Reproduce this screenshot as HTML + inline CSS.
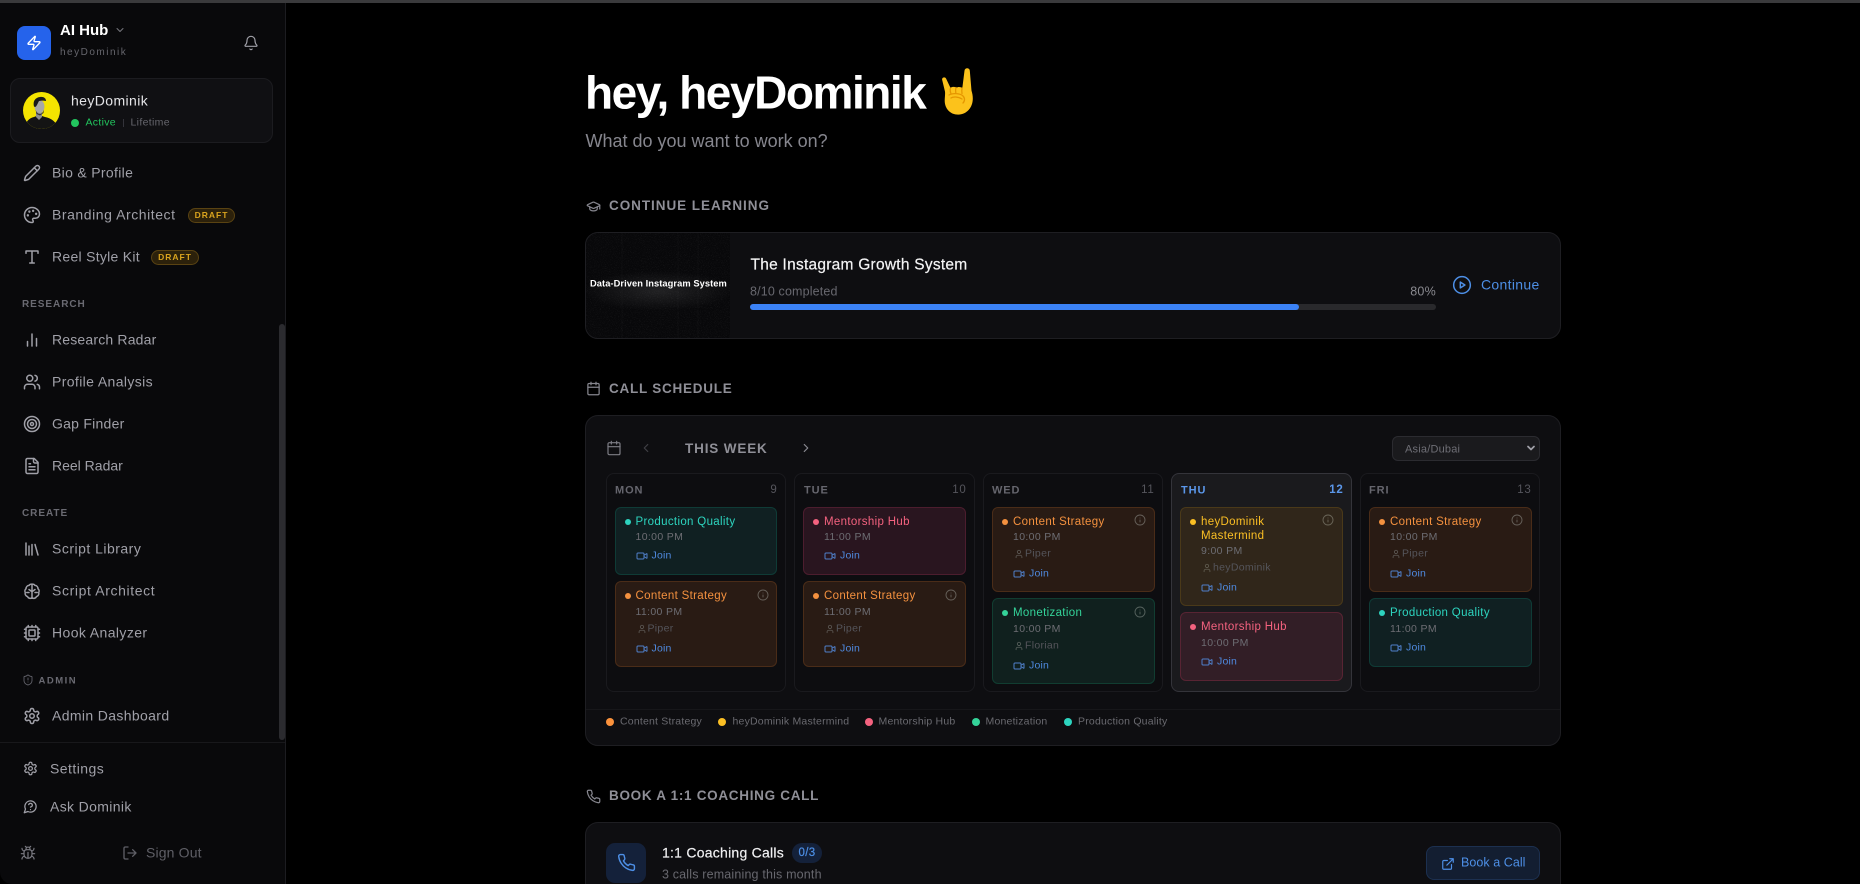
<!DOCTYPE html>
<html lang="en"><head><meta charset="utf-8"><title>AI Hub</title>
<style>
*{box-sizing:border-box;margin:0;padding:0}
html,body{width:1860px;height:884px;overflow:hidden;background:#000}
body{position:relative;font-family:"Liberation Sans",sans-serif;color:#a1a1aa}
.a{position:absolute}
.t{position:absolute;white-space:nowrap;transform:translateY(-50%);line-height:1.2}
svg.i{position:absolute;fill:none;stroke:currentColor;stroke-width:2;stroke-linecap:round;stroke-linejoin:round}
.nav{font-size:14px;letter-spacing:.38px;color:#a0a0a8;left:52px}
.navi{left:23px;width:18px;height:18px;color:#a0a0a8;stroke-width:1.8}
.sec{font-size:10px;letter-spacing:.95px;color:#6a6a72;font-weight:700;left:22px}
.draft{position:absolute;height:15px;border:1px solid #5a4312;background:#2c210b;border-radius:8px;color:#d9a31e;font-size:8.5px;font-weight:700;letter-spacing:1px;line-height:13px;text-align:center}
.h{font-size:13.5px;font-weight:700;letter-spacing:.95px;color:#8f8f97;left:609px}
.hi{left:586px;width:15px;height:15px;color:#85858d;stroke-width:1.8}
.card{position:absolute;left:585px;width:976px;background:#0e0e11;border:1px solid #1e1e22;border-radius:13px}
.col{position:absolute;top:473px;height:219px;width:180px;border:1px solid #1a1a1e;border-radius:8px;background:#0d0d10}
.col.th{background:#1a1a1d;border-color:#34343a}
.dn{font-size:11px;font-weight:700;letter-spacing:.9px;color:#66666e;top:17px}
.dnum{font-size:11.5px;letter-spacing:.7px;color:#55555c;top:17px;right:7.5px}
.ev{position:absolute;width:162.5px;border:1px solid;border-radius:6px}
.ev svg.m{margin-top:.5px}
.o{background:#291b14;border-color:#4a2c18;color:#f4913f}
.c{background:#102022;border-color:#0f3b36;color:#2dd4bf}
.r{background:#29151f;border-color:#4c1d2e;color:#f4627f}
.g{background:#10201e;border-color:#113d31;color:#34d399}
.y{background:#30261a;border-color:#4a3919;color:#fbbf24}
.rr{background:#321e26;border-color:#582433;color:#f4627f}
.dot{position:absolute;left:9px;top:11px;width:6px;height:6px;border-radius:50%;background:currentColor}
.tt{position:absolute;left:20px;font-size:11.5px;letter-spacing:.33px;line-height:13px;top:8px;white-space:nowrap}
.tm,.pn,.jn{position:absolute;white-space:nowrap}
.tm{transform:translateY(calc(-50% + 1px));left:20px;font-size:10.5px;letter-spacing:.35px;color:#6d6d73}
.pn{transform:translateY(calc(-50% + .5px));left:32px;font-size:10.5px;letter-spacing:.3px;color:#55555b}
.jn{transform:translateY(calc(-50% + .5px));left:36px;font-size:10.5px;letter-spacing:.2px;color:#4f8ae0}
.leg{font-size:10.5px;letter-spacing:.2px;color:#6a6a70;top:722px}
.ld{position:absolute;top:717.5px;width:8px;height:8px;border-radius:50%}
</style></head><body>
<svg width="0" height="0" style="position:absolute"><defs>
<symbol id="info" viewBox="0 0 24 24"><circle cx="12" cy="12" r="10"/><path d="M12 16v-4M12 8h.01"/></symbol>
<symbol id="user" viewBox="0 0 24 24"><path d="M19 21v-2a4 4 0 0 0-4-4H9a4 4 0 0 0-4 4v2"/><circle cx="12" cy="7" r="4"/></symbol>
<symbol id="vid" viewBox="0 0 24 24"><path d="m16 13 5.223 3.482a.5.5 0 0 0 .777-.416V7.870a.5.5 0 0 0-.752-.432L16 10.500"/><rect x="2" y="6" width="14" height="12" rx="2"/></symbol>
<symbol id="gear" viewBox="0 0 24 24"><path d="M12.220 2h-.44a2 2 0 0 0-2 2v.18a2 2 0 0 1-1 1.730l-.43.25a2 2 0 0 1-2 0l-.15-.08a2 2 0 0 0-2.730.73l-.22.38a2 2 0 0 0 .73 2.730l.15.1a2 2 0 0 1 1 1.720v.51a2 2 0 0 1-1 1.740l-.15.09a2 2 0 0 0-.73 2.730l.22.38a2 2 0 0 0 2.730.73l.15-.08a2 2 0 0 1 2 0l.43.25a2 2 0 0 1 1 1.730V20a2 2 0 0 0 2 2h.44a2 2 0 0 0 2-2v-.18a2 2 0 0 1 1-1.730l.43-.25a2 2 0 0 1 2 0l.15.08a2 2 0 0 0 2.730-.73l.22-.39a2 2 0 0 0-.73-2.730l-.15-.08a2 2 0 0 1-1-1.740v-.5a2 2 0 0 1 1-1.740l.15-.09a2 2 0 0 0 .73-2.730l-.22-.38a2 2 0 0 0-2.730-.73l-.15.08a2 2 0 0 1-2 0l-.43-.25a2 2 0 0 1-1-1.730V4a2 2 0 0 0-2-2z"/><circle cx="12" cy="12" r="3"/></symbol>
<symbol id="cal" viewBox="0 0 24 24"><path d="M8 2v4M16 2v4"/><rect x="3" y="4" width="18" height="18" rx="2"/><path d="M3 10h18"/></symbol>
<symbol id="phone" viewBox="0 0 24 24"><path d="M22 16.920v3a2 2 0 0 1-2.180 2 19.790 19.790 0 0 1-8.630-3.070 19.500 19.500 0 0 1-6-6 19.790 19.790 0 0 1-3.070-8.670A2 2 0 0 1 4.110 2h3a2 2 0 0 1 2 1.720 12.840 12.840 0 0 0 .7 2.810 2 2 0 0 1-.45 2.110L8.090 9.910a16 16 0 0 0 6 6l1.270-1.270a2 2 0 0 1 2.110-.45 12.840 12.840 0 0 0 2.810.7A2 2 0 0 1 22 16.920z"/></symbol>
<filter id="nz" x="0" y="0" width="100%" height="100%"><feTurbulence type="fractalNoise" baseFrequency="1.1" numOctaves="2" seed="7"/><feColorMatrix values="0 0 0 0 1 0 0 0 0 1 0 0 0 0 1 1.6 0 0 0 -0.82"/></filter>
<radialGradient id="gl" cx="50%" cy="50%" r="50%"><stop offset="0" stop-color="#fff" stop-opacity=".1"/><stop offset="1" stop-color="#fff" stop-opacity="0"/></radialGradient>
</defs></svg>

<!-- window top strip -->
<div class="a" style="left:0;top:0;width:1860px;height:3px;background:#3a3a3c"></div>

<!-- sidebar -->
<div class="a" style="left:0;top:3px;width:286px;height:881px;background:#09090b;border-right:1px solid #1c1c20;border-bottom-left-radius:12px"></div>
<div class="a" style="left:279px;top:324px;width:6px;height:416px;border-radius:3px;background:#2b2b2f"></div>

<div class="a" style="left:17px;top:26px;width:34px;height:34px;border-radius:8px;background:#2563eb"></div>
<svg class="i" viewBox="0 0 24 24" style="left:26px;top:35px;width:16px;height:16px;color:#fff"><path d="M4 14a1 1 0 0 1-.78-1.630l9.900-10.200a.5.5 0 0 1 .86.46l-1.920 6.020A1 1 0 0 0 13 10h7a1 1 0 0 1 .78 1.630l-9.900 10.200a.5.5 0 0 1-.86-.46l1.920-6.020A1 1 0 0 0 11 14z"/></svg>
<div class="t" style="left:60px;top:31px;font-size:15px;font-weight:700;color:#fff">AI Hub</div>
<svg class="i" viewBox="0 0 24 24" style="left:114px;top:24px;width:12px;height:12px;color:#77777e"><path d="m6 9 6 6 6-6"/></svg>
<div class="t" style="left:60px;top:52.500px;font-size:10px;letter-spacing:1.500px;color:#66666d">heyDominik</div>
<svg class="i" viewBox="0 0 24 24" style="left:243px;top:35px;width:16px;height:16px;color:#a0a0a8;stroke-width:1.800"><path d="M10.268 21a2 2 0 0 0 3.464 0"/><path d="M3.262 15.326A1 1 0 0 0 4 17h16a1 1 0 0 0 .74-1.673C19.410 13.956 18 12.499 18 8A6 6 0 0 0 6 8c0 4.499-1.411 5.956-2.738 7.326"/></svg>

<div class="a" style="left:10px;top:78px;width:263px;height:65px;border-radius:10px;background:#101013;border:1px solid #1c1c20"></div>
<svg class="a" viewBox="0 0 37 37" style="left:22.500px;top:92px;width:37px;height:37px"><defs><clipPath id="av"><circle cx="18.500" cy="18.500" r="18.500"/></clipPath></defs><g clip-path="url(#av)"><rect width="37" height="37" fill="#f4e400"/><path d="M2 37c0-7 4-11 9-12l5-2 6 2c6 1 12 5 13 12z" fill="#141414"/><path d="M13 18h6v7l-3 3-3-3z" fill="#8e8e8e"/><ellipse cx="16.500" cy="14.500" rx="5" ry="6.500" fill="#a8a8a8"/><path d="M11 14.500c-1.500-6 2-9 6-9.500 3.500-.5 6 1 6 4-2-.5-5-.5-7 0-1 1.500-1.500 3.500-3 5.500l-1 .5z" fill="#1a1a1a"/><path d="M12.500 17.500c1 3 2.500 4.500 4.500 4.500 1.500 0 3-1.500 4-4.500l-.5 3.500-3.500 2.500-3.500-1.500z" fill="#333"/></g></svg>
<div class="t" style="left:71px;top:101px;font-size:14px;letter-spacing:.4px;color:#e4e4e7">heyDominik</div>
<div class="a" style="left:71px;top:119px;width:8px;height:8px;border-radius:50%;background:#22c55e"></div>
<div class="t" style="left:85.500px;top:123px;font-size:10.500px;letter-spacing:.3px;color:#22c55e">Active</div>
<div class="a" style="left:122.500px;top:119px;width:1px;height:8px;background:#33333a"></div>
<div class="t" style="left:130.500px;top:123px;font-size:10.500px;letter-spacing:.33px;color:#66666d">Lifetime</div>

<svg class="i navi" viewBox="0 0 24 24" style="top:164px"><path d="M21.174 6.812a1 1 0 0 0-3.986-3.987L3.842 16.174a2 2 0 0 0-.5.83l-1.321 4.352a.5.5 0 0 0 .623.622l4.353-1.320a2 2 0 0 0 .83-.497z"/><path d="m15 5 4 4"/></svg>
<div class="t nav" style="top:173px;letter-spacing:.32px">Bio &amp; Profile</div>
<svg class="i navi" viewBox="0 0 24 24" style="top:206px"><path d="M12 2C6.500 2 2 6.500 2 12s4.500 10 10 10c.926 0 1.648-.746 1.648-1.688 0-.437-.18-.835-.437-1.125-.29-.289-.438-.652-.438-1.125a1.640 1.640 0 0 1 1.668-1.668h1.996c3.051 0 5.555-2.503 5.555-5.554C21.965 6.012 17.461 2 12 2z"/><circle cx="13.500" cy="6.500" r=".6" fill="currentColor"/><circle cx="17.500" cy="10.500" r=".6" fill="currentColor"/><circle cx="8.500" cy="7.500" r=".6" fill="currentColor"/><circle cx="6.500" cy="12.500" r=".6" fill="currentColor"/></svg>
<div class="t nav" style="top:215px;letter-spacing:.55px">Branding Architect</div>
<div class="draft" style="left:188px;top:208px;width:47px">DRAFT</div>
<svg class="i navi" viewBox="0 0 24 24" style="top:248px"><path d="M4 7V4h16v3M9 20h6M12 4v16"/></svg>
<div class="t nav" style="top:257px;letter-spacing:.28px">Reel Style Kit</div>
<div class="draft" style="left:151px;top:250px;width:48px">DRAFT</div>

<div class="t sec" style="top:305px">RESEARCH</div>
<svg class="i navi" viewBox="0 0 24 24" style="top:331px"><path d="M18 20V10M12 20V4M6 20v-6"/></svg>
<div class="t nav" style="top:340px;letter-spacing:.18px">Research Radar</div>
<svg class="i navi" viewBox="0 0 24 24" style="top:373px"><path d="M16 21v-2a4 4 0 0 0-4-4H6a4 4 0 0 0-4 4v2"/><circle cx="9" cy="7" r="4"/><path d="M22 21v-2a4 4 0 0 0-3-3.870"/><path d="M16 3.130a4 4 0 0 1 0 7.750"/></svg>
<div class="t nav" style="top:382px">Profile Analysis</div>
<svg class="i navi" viewBox="0 0 24 24" style="top:415px"><circle cx="12" cy="12" r="10"/><circle cx="12" cy="12" r="6"/><circle cx="12" cy="12" r="2"/></svg>
<div class="t nav" style="top:424px;letter-spacing:.25px">Gap Finder</div>
<svg class="i navi" viewBox="0 0 24 24" style="top:457px"><path d="M15 2H6a2 2 0 0 0-2 2v16a2 2 0 0 0 2 2h12a2 2 0 0 0 2-2V7Z"/><path d="M14 2v4a2 2 0 0 0 2 2h4"/><path d="M10 9H8M16 13H8M16 17H8"/></svg>
<div class="t nav" style="top:466px;letter-spacing:0">Reel Radar</div>

<div class="t sec" style="top:514px">CREATE</div>
<svg class="i navi" viewBox="0 0 24 24" style="top:540px"><path d="m16 6 4 14M12 6v14M8 8v12M4 4v16"/></svg>
<div class="t nav" style="top:549px;letter-spacing:.49px">Script Library</div>
<svg class="i navi" viewBox="0 0 24 24" style="top:582px"><path d="M12 3a4 4 0 0 0-4 1.500A4.500 4.500 0 0 0 4 9a4 4 0 0 0-1 5 4.500 4.500 0 0 0 3 5.500A4 4 0 0 0 12 21a4 4 0 0 0 6-1.500 4.500 4.500 0 0 0 3-5.500 4 4 0 0 0-1-5 4.500 4.500 0 0 0-4-4.500A4 4 0 0 0 12 3z"/><path d="M12 3v18M12 13l-4-3M12 13l4-3M5 14h3M19 14h-3"/></svg>
<div class="t nav" style="top:591px;letter-spacing:.62px">Script Architect</div>
<svg class="i navi" viewBox="0 0 24 24" style="top:624px"><path d="M12 20v2M12 2v2M17 20v2M17 2v2M2 12h2M2 17h2M2 7h2M20 12h2M20 17h2M20 7h2M7 20v2M7 2v2"/><rect x="4" y="4" width="16" height="16" rx="2"/><rect x="8" y="8" width="8" height="8" rx="1"/></svg>
<div class="t nav" style="top:633px;letter-spacing:.4px">Hook Analyzer</div>

<svg class="i" viewBox="0 0 24 24" style="left:22px;top:674px;width:12px;height:12px;color:#62626a;stroke-width:1.800"><path d="M20 13c0 5-3.500 7.500-7.660 8.950a1 1 0 0 1-.67-.01C7.500 20.500 4 18 4 13V6a1 1 0 0 1 1-1c2 0 4.500-1.200 6.240-2.720a1.170 1.170 0 0 1 1.520 0C14.510 3.810 17 5 19 5a1 1 0 0 1 1 1z"/><path d="M12 8v4M12 16h.01"/></svg>
<div class="t sec" style="left:38.500px;top:681px;font-size:9.500px;letter-spacing:1.500px">ADMIN</div>
<svg class="i navi" viewBox="0 0 24 24" style="top:707px"><use href="#gear"/></svg>
<div class="t nav" style="top:716px;letter-spacing:.36px">Admin Dashboard</div>

<div class="a" style="left:0;top:742px;width:285px;height:1px;background:#18181b"></div>
<svg class="i navi" viewBox="0 0 24 24" style="top:761px;left:23px;width:15px;height:15px"><use href="#gear"/></svg>
<div class="t nav" style="left:50px;top:769px;letter-spacing:.45px">Settings</div>
<svg class="i navi" viewBox="0 0 24 24" style="top:799px;left:23px;width:15px;height:15px"><path d="M7.900 20A9 9 0 1 0 4 16.100L2 22Z"/><path d="M9.090 9a3 3 0 0 1 5.830 1c0 2-3 3-3 3M12 17h.01"/></svg>
<div class="t nav" style="left:50px;top:807px;letter-spacing:.36px">Ask Dominik</div>
<svg class="i" viewBox="0 0 24 24" style="left:20px;top:845px;width:16px;height:16px;color:#7a7a82;stroke-width:1.800"><path d="m8 2 1.880 1.880M14.120 3.880 16 2M9 7.130v-1a3 3 0 1 1 6 0v1"/><path d="M12 20c-3.300 0-6-2.700-6-6v-3a4 4 0 0 1 4-4h4a4 4 0 0 1 4 4v3c0 3.300-2.700 6-6 6M12 20v-9"/><path d="M6.530 9C4.600 8.800 3 7.100 3 5M6 13H2M3 21c0-2.100 1.700-3.900 3.800-4M20.970 5c0 2.100-1.600 3.800-3.500 4M22 13h-4M17.200 17c2.100.1 3.800 1.900 3.800 4"/></svg>
<svg class="i" viewBox="0 0 24 24" style="left:122px;top:844.500px;width:16px;height:16px;color:#5f5f66"><path d="M9 21H5a2 2 0 0 1-2-2V5a2 2 0 0 1 2-2h4M16 17l5-5-5-5M21 12H9"/></svg>
<div class="t nav" style="left:146px;top:853px;color:#5f5f66;letter-spacing:.15px">Sign Out</div>

<!-- main heading -->
<div class="t" style="left:585px;top:93px;font-size:46px;font-weight:700;letter-spacing:-1.450px;color:#fff">hey, heyDominik</div>
<svg class="a" viewBox="0 0 33 47" style="left:941px;top:68px;width:33px;height:47px"><path d="M1.200 12c-.8-2.500 2.800-3.800 3.900-1.400l4.400 9.300c1.800-1.300 4.300-1.300 5.800 0 1.800-1.300 4.300-1.100 6 .3l2.200-17.500c.3-3.200 5-3.200 5.300-.1l1.700 20c.8 2.800 1.300 5 1.300 8 0 9-6.300 16-14.600 16-8 0-13.500-6-13.500-14 0-3 .6-6 .3-9z" fill="#fcc21b"/><path d="M15 19.500c-.6 2-.6 3.500-.2 5.500M21 20c-.3 2-.3 3.500 0 5.500M9.500 20c-.6 2-.2 4 .5 6M8 27c3-2 11-2 14 1 2 2 2 5 0 7M10 30c2-1.500 7-1.500 11 1" fill="none" stroke="#e59600" stroke-width="1.300" stroke-linecap="round"/></svg>
<div class="t" style="left:585.500px;top:141.500px;font-size:18px;color:#86868e">What do you want to work on?</div>

<!-- continue learning -->
<svg class="i hi" viewBox="0 0 24 24" style="top:199px"><path d="M21.420 10.922a1 1 0 0 0-.019-1.838L12.830 5.180a2 2 0 0 0-1.660 0L2.600 9.080a1 1 0 0 0 0 1.832l8.570 3.908a2 2 0 0 0 1.660 0z"/><path d="M22 10v6M6 12.500V16a6 3 0 0 0 12 0v-3.500"/></svg>
<div class="t h" style="top:206px">CONTINUE LEARNING</div>
<div class="card" style="top:232px;height:107px"></div>
<div class="a" style="left:586px;top:233px;width:144px;height:105px;background:#08080a;border-radius:12px 0 0 12px;overflow:hidden">
<svg width="144" height="105" style="position:absolute;left:0;top:0"><rect width="144" height="105" filter="url(#nz)" opacity=".13"/><ellipse cx="72" cy="58" rx="76" ry="20" fill="url(#gl)"/><path d="M36 0v105M92 0v105M112 0v105" stroke="#fff" stroke-opacity=".025"/></svg>
<div class="t" style="left:4px;top:51px;font-size:9.300px;font-weight:700;letter-spacing:.07px;color:#fff">Data-Driven Instagram System</div></div>
<div class="t" style="left:750.500px;top:265.500px;font-size:15.500px;letter-spacing:.25px;color:#f4f4f5;-webkit-text-stroke:.2px #f4f4f5">The Instagram Growth System</div>
<div class="t" style="left:750px;top:291.500px;font-size:12.500px;letter-spacing:.15px;color:#68686f">8/10 completed</div>
<div class="t" style="right:424px;top:291.500px;font-size:12.500px;letter-spacing:.25px;color:#8a8a90">80%</div>
<div class="a" style="left:750px;top:304px;width:686px;height:6px;border-radius:3px;background:#29292c"></div>
<div class="a" style="left:750px;top:304px;width:549px;height:6px;border-radius:3px;background:#3b82f6"></div>
<svg class="i" viewBox="0 0 24 24" style="left:1452px;top:274.500px;width:20px;height:20px;color:#4d8fe6;stroke-width:1.800"><circle cx="12" cy="12" r="10"/><path d="M10 8.500v7l5.500-3.500z"/></svg>
<div class="t" style="left:1481px;top:285px;font-size:14px;letter-spacing:.32px;color:#4d8fe6">Continue</div>

<!-- call schedule -->
<svg class="i hi" viewBox="0 0 24 24" style="top:381px"><use href="#cal"/></svg>
<div class="t h" style="top:389px;letter-spacing:.75px">CALL SCHEDULE</div>
<div class="card" style="top:415px;height:331px"></div>
<svg class="i" viewBox="0 0 24 24" style="left:606px;top:440px;width:16px;height:16px;color:#7d7d85;stroke-width:1.800"><use href="#cal"/></svg>
<svg class="i" viewBox="0 0 24 24" style="left:639px;top:441px;width:14px;height:14px;color:#3f3f45"><path d="m15 18-6-6 6-6"/></svg>
<div class="t" style="left:685px;top:449px;font-size:13.500px;font-weight:700;letter-spacing:.85px;color:#8f8f97">THIS WEEK</div>
<svg class="i" viewBox="0 0 24 24" style="left:799px;top:441px;width:14px;height:14px;color:#8a8a92"><path d="m9 18 6-6-6-6"/></svg>
<div class="a" style="left:1392px;top:436px;width:148px;height:25px;border-radius:6px;background:#1a1a1d;border:1px solid #2b2b30"></div>
<div class="t" style="left:1405px;top:449.500px;font-size:11px;letter-spacing:.2px;color:#6e6e75">Asia/Dubai</div>
<svg class="i" viewBox="0 0 24 24" style="left:1525px;top:442px;width:12px;height:12px;color:#a0a0a8;stroke-width:3.500"><path d="m6 9 6 6 6-6"/></svg>

<!-- MON -->
<div class="col" style="left:606px"><div class="t dn" style="left:8px">MON</div><div class="t dnum">9</div></div>
<div class="ev c" style="left:614.500px;top:507px;height:68px"><i class="dot"></i><div class="tt">Production Quality</div><div class="tm" style="top:28px">10:00 PM</div><svg class="i m" viewBox="0 0 24 24" style="left:20px;top:41px;width:12px;height:12px;color:#4f7fc9"><use href="#vid"/></svg><div class="jn" style="top:47px">Join</div></div>
<div class="ev o" style="left:614.500px;top:581px;height:86px"><i class="dot"></i><div class="tt">Content Strategy</div><svg class="i" viewBox="0 0 24 24" style="left:141px;top:7px;width:12px;height:12px;color:#66605a;stroke-width:1.800"><use href="#info"/></svg><div class="tm" style="top:29px">11:00 PM</div><svg class="i m" viewBox="0 0 24 24" style="left:21px;top:41px;width:10px;height:10px;color:#5e5a56"><use href="#user"/></svg><div class="pn" style="top:46px">Piper</div><svg class="i m" viewBox="0 0 24 24" style="left:20px;top:60px;width:12px;height:12px;color:#4f7fc9"><use href="#vid"/></svg><div class="jn" style="top:65.500px">Join</div></div>
<!-- TUE -->
<div class="col" style="left:794px;width:181px"><div class="t dn" style="left:9px">TUE</div><div class="t dnum">10</div></div>
<div class="ev r" style="left:803px;top:507px;height:68px"><i class="dot"></i><div class="tt">Mentorship Hub</div><div class="tm" style="top:28px">11:00 PM</div><svg class="i m" viewBox="0 0 24 24" style="left:20px;top:41px;width:12px;height:12px;color:#4f7fc9"><use href="#vid"/></svg><div class="jn" style="top:47px">Join</div></div>
<div class="ev o" style="left:803px;top:581px;height:86px"><i class="dot"></i><div class="tt">Content Strategy</div><svg class="i" viewBox="0 0 24 24" style="left:141px;top:7px;width:12px;height:12px;color:#66605a;stroke-width:1.800"><use href="#info"/></svg><div class="tm" style="top:29px">11:00 PM</div><svg class="i m" viewBox="0 0 24 24" style="left:21px;top:41px;width:10px;height:10px;color:#5e5a56"><use href="#user"/></svg><div class="pn" style="top:46px">Piper</div><svg class="i m" viewBox="0 0 24 24" style="left:20px;top:60px;width:12px;height:12px;color:#4f7fc9"><use href="#vid"/></svg><div class="jn" style="top:65.500px">Join</div></div>
<!-- WED -->
<div class="col" style="left:983px"><div class="t dn" style="left:8px">WED</div><div class="t dnum">11</div></div>
<div class="ev o" style="left:992px;top:507px;height:85px"><i class="dot"></i><div class="tt">Content Strategy</div><svg class="i" viewBox="0 0 24 24" style="left:141px;top:6px;width:12px;height:12px;color:#66605a;stroke-width:1.800"><use href="#info"/></svg><div class="tm" style="top:28px">10:00 PM</div><svg class="i m" viewBox="0 0 24 24" style="left:21px;top:40px;width:10px;height:10px;color:#5e5a56"><use href="#user"/></svg><div class="pn" style="top:45px">Piper</div><svg class="i m" viewBox="0 0 24 24" style="left:20px;top:59px;width:12px;height:12px;color:#4f7fc9"><use href="#vid"/></svg><div class="jn" style="top:64.500px">Join</div></div>
<div class="ev g" style="left:992px;top:598px;height:86px"><i class="dot"></i><div class="tt">Monetization</div><svg class="i" viewBox="0 0 24 24" style="left:141px;top:7px;width:12px;height:12px;color:#56625e;stroke-width:1.800"><use href="#info"/></svg><div class="tm" style="top:29px">10:00 PM</div><svg class="i m" viewBox="0 0 24 24" style="left:21px;top:41px;width:10px;height:10px;color:#5a625e"><use href="#user"/></svg><div class="pn" style="top:46px">Florian</div><svg class="i m" viewBox="0 0 24 24" style="left:20px;top:60px;width:12px;height:12px;color:#4f7fc9"><use href="#vid"/></svg><div class="jn" style="top:65.500px">Join</div></div>
<!-- THU -->
<div class="col th" style="left:1171px;width:181px"><div class="t dn" style="left:9px;color:#5b97ea">THU</div><div class="t dnum" style="color:#5b97ea;font-weight:700">12</div></div>
<div class="ev y" style="left:1180px;top:507px;height:99px"><i class="dot"></i><div class="tt" style="line-height:13.500px">heyDominik<br>Mastermind</div><svg class="i" viewBox="0 0 24 24" style="left:141px;top:6px;width:12px;height:12px;color:#6a6558;stroke-width:1.800"><use href="#info"/></svg><div class="tm" style="top:42px">9:00 PM</div><svg class="i m" viewBox="0 0 24 24" style="left:21px;top:54px;width:10px;height:10px;color:#625e52"><use href="#user"/></svg><div class="pn" style="top:59px">heyDominik</div><svg class="i m" viewBox="0 0 24 24" style="left:20px;top:73px;width:12px;height:12px;color:#4f7fc9"><use href="#vid"/></svg><div class="jn" style="top:78.500px">Join</div></div>
<div class="ev rr" style="left:1180px;top:612px;height:69px"><i class="dot"></i><div class="tt">Mentorship Hub</div><div class="tm" style="top:29px">10:00 PM</div><svg class="i m" viewBox="0 0 24 24" style="left:20px;top:42px;width:12px;height:12px;color:#4f7fc9"><use href="#vid"/></svg><div class="jn" style="top:48px">Join</div></div>
<!-- FRI -->
<div class="col" style="left:1360px"><div class="t dn" style="left:8px">FRI</div><div class="t dnum">13</div></div>
<div class="ev o" style="left:1369px;top:507px;height:85px"><i class="dot"></i><div class="tt">Content Strategy</div><svg class="i" viewBox="0 0 24 24" style="left:141px;top:6px;width:12px;height:12px;color:#66605a;stroke-width:1.800"><use href="#info"/></svg><div class="tm" style="top:28px">10:00 PM</div><svg class="i m" viewBox="0 0 24 24" style="left:21px;top:40px;width:10px;height:10px;color:#5e5a56"><use href="#user"/></svg><div class="pn" style="top:45px">Piper</div><svg class="i m" viewBox="0 0 24 24" style="left:20px;top:59px;width:12px;height:12px;color:#4f7fc9"><use href="#vid"/></svg><div class="jn" style="top:64.500px">Join</div></div>
<div class="ev c" style="left:1369px;top:598px;height:69px"><i class="dot"></i><div class="tt">Production Quality</div><div class="tm" style="top:29px">11:00 PM</div><svg class="i m" viewBox="0 0 24 24" style="left:20px;top:42px;width:12px;height:12px;color:#4f7fc9"><use href="#vid"/></svg><div class="jn" style="top:48px">Join</div></div>

<!-- legend -->
<div class="a" style="left:586px;top:709px;width:974px;height:1px;background:#17171a"></div>
<i class="ld" style="left:606px;background:#fb923c"></i><div class="t leg" style="left:620px">Content Strategy</div>
<i class="ld" style="left:718px;background:#fbbf24"></i><div class="t leg" style="left:732.500px">heyDominik Mastermind</div>
<i class="ld" style="left:865px;background:#f4627f"></i><div class="t leg" style="left:878.500px">Mentorship Hub</div>
<i class="ld" style="left:972px;background:#34d399"></i><div class="t leg" style="left:985.500px">Monetization</div>
<i class="ld" style="left:1064px;background:#2dd4bf"></i><div class="t leg" style="left:1078px">Production Quality</div>

<!-- coaching -->
<svg class="i hi" viewBox="0 0 24 24" style="top:789px"><use href="#phone"/></svg>
<div class="t h" style="top:796px;letter-spacing:.7px">BOOK A 1:1 COACHING CALL</div>
<div class="card" style="top:822px;height:90px"></div>
<div class="a" style="left:606px;top:843px;width:40px;height:40px;border-radius:9px;background:#14213a"></div>
<svg class="i" viewBox="0 0 24 24" style="left:617px;top:853px;width:19px;height:19px;color:#4d8fe6;stroke-width:1.800"><use href="#phone"/></svg>
<div class="t" style="left:662px;top:853px;font-size:14px;letter-spacing:.25px;color:#f0f0f2;-webkit-text-stroke:.2px #f0f0f2">1:1 Coaching Calls</div>
<div class="a" style="left:792px;top:843px;width:30px;height:20px;border-radius:10px;background:#14213a;color:#4d8fe6;font-size:11.500px;letter-spacing:.3px;line-height:20px;text-align:center;-webkit-text-stroke:.2px #4d8fe6">0/3</div>
<div class="t" style="left:662px;top:875px;font-size:12.500px;letter-spacing:.17px;color:#68686f">3 calls remaining this month</div>
<div class="a" style="left:1426px;top:846px;width:114px;height:34px;border-radius:8px;background:#131e31;border:1px solid #1c3050"></div>
<svg class="i" viewBox="0 0 24 24" style="left:1441px;top:857px;width:14px;height:14px;color:#4d8fe6"><path d="M15 3h6v6M10 14 21 3M18 13v6a2 2 0 0 1-2 2H5a2 2 0 0 1-2-2V8a2 2 0 0 1 2-2h6"/></svg>
<div class="t" style="left:1461px;top:863px;font-size:12.500px;letter-spacing:.05px;color:#4d8fe6">Book a Call</div>
</body></html>
